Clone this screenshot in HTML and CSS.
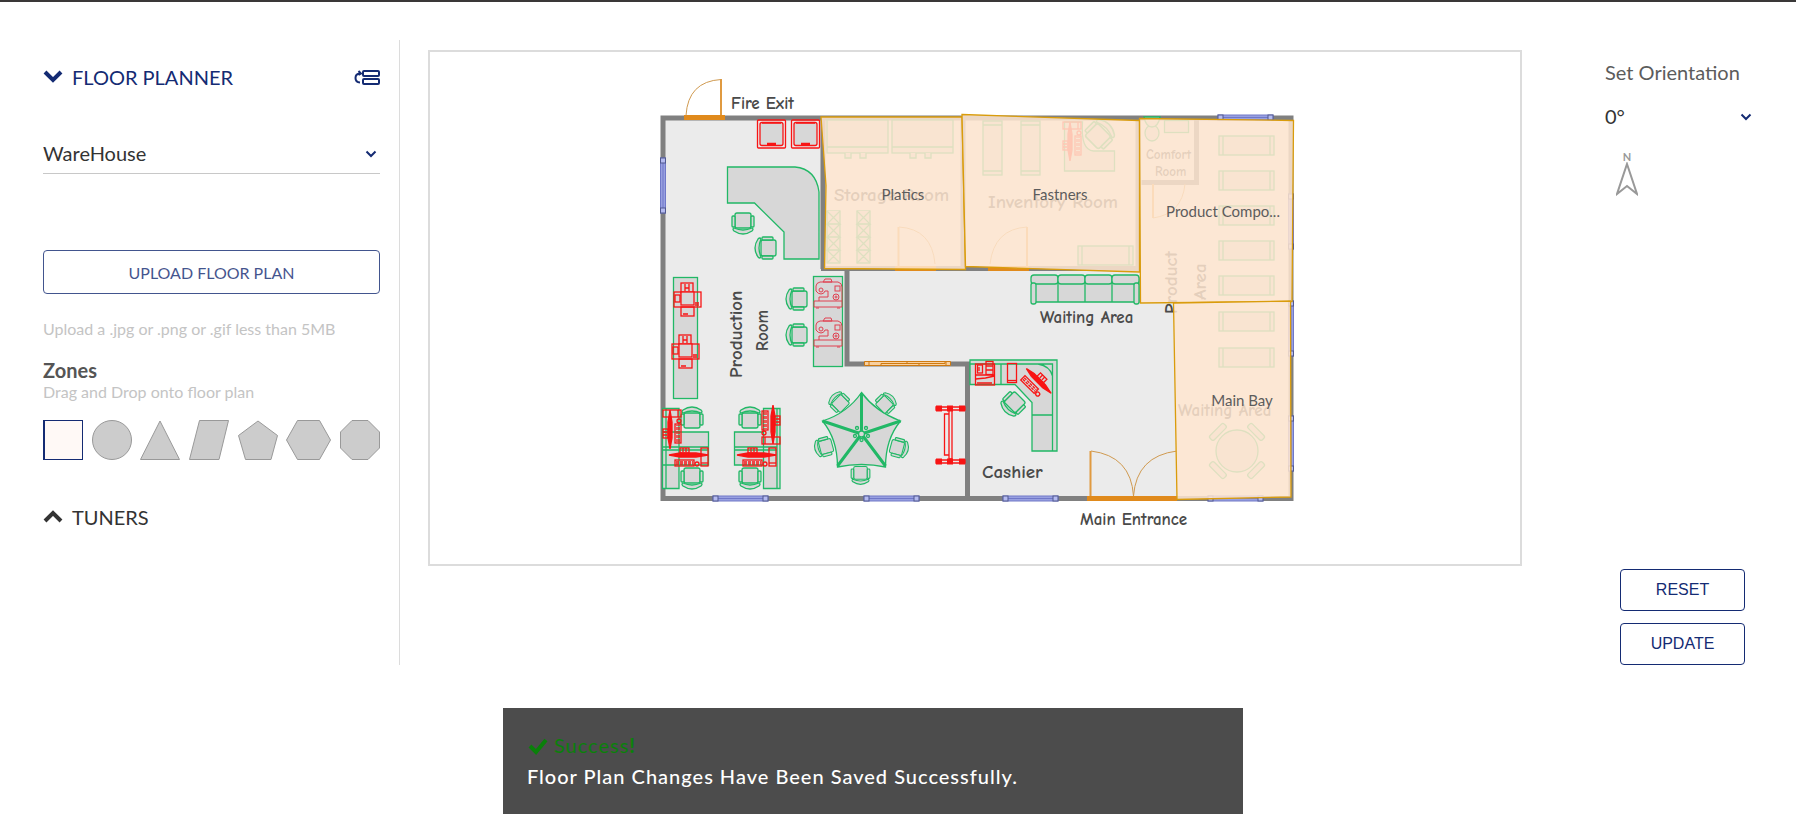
FILE: index.html
```html
<!DOCTYPE html>
<html lang="en">
    <head>
        <meta charset="UTF-8">
        <meta name="viewport" content="width=device-width, initial-scale=1.0">
        <title>Floor Planner</title>
        <link rel="stylesheet" href="styles.css">
    </head>
    <body>
        <main class="workspace">
            <aside class="sidebar">
                <div class="section-header active">
                    <svg class="section-arrow" width="20" height="14" viewBox="0 0 20 14"><path d="M2 2l8 8 8-8"/></svg>
                    <h2>FLOOR PLANNER</h2>
                    <svg class="layers-icon" width="26" height="18" viewBox="0 0 26 18">
                        <rect x="9" y="3" width="16" height="5" rx="1"/>
                        <rect x="9" y="11" width="16" height="5" rx="1"/>
                        <path d="M6 14.500C0 14 0 6 6 5.500M4.500 3l2.500 2.500L4.500 7"/>
                    </svg>
                </div>
                <div class="select-box plan-select">
                    <select aria-label="Floor plan">
                        <option>WareHouse</option>
                    </select>
                    <svg width="12" height="10" viewBox="0 0 12 10"><path d="M1.500 2.500l4.500 4.500 4.500-4.500"/></svg>
                </div>
                <button type="button" class="upload-button">UPLOAD FLOOR PLAN</button>
                <p class="hint">Upload a .jpg or .png or .gif less than 5MB</p>
                <h3>Zones</h3>
                <p class="hint">Drag and Drop onto floor plan</p>
                <div class="shapes">
                    <svg class="selected" width="40" height="40"><rect x="1" y="0.500" width="38.500" height="39"/><path d="M1 0v40"/></svg>
                    <svg width="40" height="40"><circle cx="20" cy="20" r="19.500"/></svg>
                    <svg width="40" height="40"><path d="M20 1l19.500 38.500H0.500z"/></svg>
                    <svg width="40" height="40"><path d="M10.500 0.500h29l-9.500 39H0.500z"/></svg>
                    <svg width="40" height="40"><path d="M20 1l19.500 14.500-6.500 24H7.500l-7-24z"/></svg>
                    <svg width="45" height="40"><path d="M11.500 0.500h22l11 19.500-11 19.500h-22L0.500 20z"/></svg>
                    <svg width="40" height="40"><path d="M12 0.500h16l11.500 11.500v16L28 39.500H12L0.500 28V12z"/></svg>
                </div>
                <div class="section-header">
                    <svg class="section-arrow" width="20" height="14" viewBox="0 0 20 14"><path d="M2 11l8-8 8 8"/></svg>
                    <h2>TUNERS</h2>
                </div>
            </aside>

            <section class="canvas">
                <svg class="plan" viewBox="430 52 1090 512">
                    <defs>
                        <g id="chair" class="furniture">
                            <rect x="-8" y="-10" width="16" height="15" rx="2"/>
                            <rect x="-11" y="-7" width="3" height="11" rx="1"/>
                            <rect x="8" y="-7" width="3" height="11" rx="1"/>
                            <path d="M-9 5q9 4 18 0q2 1 0 3q-9 6-18 0q-2-2 0-3z"/>
                        </g>
                        <g id="bed" class="furniture">
                            <rect width="55" height="19"/>
                            <path d="M4 0v19M51 0v19"/>
                        </g>
                        <g id="shelf" class="furniture">
                            <rect width="19" height="54"/>
                            <path d="M0 4h19M0 50h19"/>
                        </g>
                        <g id="crates" class="furniture">
                            <rect width="13" height="52"/>
                            <path d="M0 0l13 13H0L13 0M0 13l13 13H0l13-13M0 26l13 13H0l13-13M0 39l13 13M0 52l13-13"/>
                        </g>
                        <g id="cabinet" class="furniture">
                            <rect width="61" height="33"/>
                            <path d="M0 27h61M18 33v5h6v-5M33 33v5h6v-5"/>
                        </g>
                        <g id="printer" class="machine">
                            <rect x="-7" y="-16" width="12" height="10"/>
                            <path d="M-3-15v7M1-15v7M-3-11h4"/>
                            <rect x="-14" y="-7" width="27" height="15"/>
                            <rect x="-13" y="-4" width="5" height="7"/>
                            <rect class="solid" x="-7" y="-7" width="13" height="13"/>
                            <rect x="-7" y="8" width="13" height="9"/>
                            <path d="M-5 15h5M7 4h4M7 6h4"/>
                        </g>
                        <g id="sewing" class="machine thin">
                            <path d="M-14 7h28v6h-28zM-9 7v-4h9v-6h-3q-1 3-4 3t-5-3v-5q0-3 4-4h18q4 1 4 5v14M-5-12h9l-1-3h-6zM-12 14h3M9 14h3"/>
                            <circle cx="-7" cy="-4" r="2"/>
                            <circle cx="8" cy="3" r="3"/>
                            <circle cx="8" cy="3" r="1"/>
                            <rect x="7" y="-8" width="5" height="5"/>
                        </g>
                        <g id="computer" class="machine">
                            <path class="screen" d="M-19-2l11-2h16l12 2-12 2h-16z"/>
                            <rect x="-8" y="-9" width="9" height="5"/>
                            <path d="M-5-9v4M-2-9v4"/>
                            <rect x="-13" y="3" width="19" height="6"/>
                            <path class="keys" d="M-12 5h17M-12 7h17"/>
                            <circle cx="9" cy="7" r="2"/>
                            <rect x="13" y="-9" width="7" height="18"/>
                            <path d="M13 6h7"/>
                        </g>
                        <g id="window" class="window">
                            <rect width="55" height="5"/>
                            <path d="M5 2.500h45"/>
                            <rect class="frame" width="5" height="5"/>
                            <rect class="frame" x="50" width="5" height="5"/>
                        </g>
                        <g id="washer" class="machine">
                            <rect x="0.500" y="0.500" width="28" height="28" rx="1"/>
                            <rect class="solid" x="3" y="3" width="23" height="23" rx="2"/>
                            <path d="M5 3.500h19M10 25.500h9M10 24h9"/>
                        </g>
                    </defs>

                    <!-- walls -->
                    <rect class="floor" x="663" y="118" width="628" height="380.500"/>
                    <path class="wall" d="M823 118v151M821 268.500h319M847 269v95.500M844.500 364h125.500M967.500 362v136M963 118v150M1138 118v150M1196.500 118v64.500h-55"/>

                    <!-- windows -->
                    <use href="#window" x="713" y="496"/>
                    <use href="#window" x="864" y="496"/>
                    <use href="#window" x="1003" y="496"/>
                    <use href="#window" x="1208" y="496"/>
                    <use href="#window" x="1218" y="115"/>
                    <use href="#window" transform="translate(665.500 158) rotate(90)"/>
                    <use href="#window" transform="translate(1293.500 194) rotate(90)"/>
                    <use href="#window" transform="translate(1293.500 301) rotate(90)"/>
                    <use href="#window" transform="translate(1293.500 416) rotate(90)"/>

                    <!-- doors -->
                    <path class="sill" d="M684 117.500h41M1087 498.500h90M895 268.500h41M988 268.500h41"/>
                    <path class="leaf" d="M721 79v36M1090.500 451v45M898.500 227v40M1027 227v40M1153 184v34"/>
                    <path class="swing" d="M721 79.500q-33 2-35 36M1091 451q40 5 42.500 45q3-40 43.500-45M899 227q33 2 36 37M1027 227q-33 2-37 37M1153 218q29-4 32-34"/>
                    <path class="slider" d="M864.500 361.500h86v4h-86zM881 363.500h38v2h-38zM907 361.500h38v2h-38zM869 361.500v4M946 361.500v4"/>

                    <!-- production room -->
                    <use href="#washer" x="757" y="119.500"/>
                    <use href="#washer" x="791" y="119.500"/>
                    <path class="furniture" d="M727.500 167H795q21 2 24 25v67h-35v-27l-29.500-29h-27z"/>
                    <use href="#chair" transform="translate(743 223)"/>
                    <use href="#chair" transform="translate(766 248) rotate(90)"/>
                    <rect class="furniture" x="673.500" y="277.500" width="24" height="121"/>
                    <use href="#printer" x="688" y="299"/>
                    <use href="#printer" x="686" y="351"/>
                    <rect class="furniture" x="813.500" y="276.500" width="29" height="90"/>
                    <use href="#sewing" x="828" y="294"/>
                    <use href="#sewing" x="828" y="333"/>
                    <use href="#chair" transform="translate(797 299) rotate(90)"/>
                    <use href="#chair" transform="translate(797 335) rotate(90)"/>

                    <path class="furniture" d="M662.500 408.500h16.500v80h-16.500zM666 408.500v80M662.500 432h46v33h-46zM662.500 447h46M662.500 450h46"/>
                    <use href="#chair" transform="translate(692 418) rotate(180)"/>
                    <use href="#chair" transform="translate(692 478)"/>
                    <use href="#computer" transform="translate(672 430) rotate(-90)"/>
                    <use href="#computer" transform="translate(688 457)"/>

                    <path class="furniture" d="M763.500 408.500h16.500v80h-16.500zM777 408.500v80M734.500 432h29v33h-29zM734.500 447h42M734.500 450h42"/>
                    <use href="#chair" transform="translate(750 418) rotate(180)"/>
                    <use href="#chair" transform="translate(750 478)"/>
                    <use href="#computer" transform="translate(771 424) rotate(90)"/>
                    <use href="#computer" transform="translate(756 457)"/>

                    <!-- parasol table -->
                    <path class="furniture" d="M861.500 392.500q14 19 39 28.500q-15 18-15 46q-24-5-48 0q0-28-15-46q25-8 39-28.500z"/>
                    <path class="ribs" d="M861.500 434v-41M861.500 434l39-13M861.500 434l24 32M861.500 434l-24 32M861.500 434l-39-13"/>
                    <circle class="furniture" cx="861.500" cy="434" r="3"/>
                    <circle class="furniture" cx="857" cy="428" r="1.500"/>
                    <circle class="furniture" cx="866" cy="428" r="1.500"/>
                    <circle class="furniture" cx="855" cy="436" r="1.500"/>
                    <circle class="furniture" cx="868" cy="436" r="1.500"/>
                    <circle class="furniture" cx="861.500" cy="440" r="1.500"/>
                    <use href="#chair" transform="translate(839 402) rotate(135) scale(.85)"/>
                    <use href="#chair" transform="translate(886 403) rotate(-135) scale(.85)"/>
                    <use href="#chair" transform="translate(824 447) rotate(75) scale(.85)"/>
                    <use href="#chair" transform="translate(899 448) rotate(-75) scale(.85)"/>
                    <use href="#chair" transform="translate(860.500 475) scale(.85)"/>

                    <!-- rack -->
                    <g class="machine">
                        <path d="M949 411v48h3v-48M944.500 414h4.500v41h-4.500z"/>
                        <path d="M936 407h29v3h-29zM936 460h29v3h-29z"/>
                        <path class="bolts" d="M936 408.500h6M947 408.500h6M959 408.500h6M936 461.500h6M947 461.500h6M959 461.500h6"/>
                    </g>

                    <!-- cashier -->
                    <path class="furniture" d="M970 360h87v91h-25v-48.500l-17-18h-45z"/>
                    <path class="furniture outline" d="M970 364h82.500v87M1001 364v20.500M1032 415h20.500M1038 364q12 2 14.500 12"/>
                    <use href="#chair" transform="translate(1013 404) rotate(45)"/>
                    <g class="machine">
                        <rect x="975.500" y="364" width="19" height="21"/>
                        <rect x="986" y="361.500" width="7" height="13"/>
                        <rect x="977.500" y="365" width="5" height="8"/>
                        <path d="M975.500 375h19M975.500 379l10-1 9-2M979 367v4M986 366h7M986 370h7M977 383h15"/>
                        <rect x="1007.500" y="363.500" width="9" height="19"/>
                        <path d="M1007.500 380.500h9"/>
                    </g>
                    <g class="machine" transform="translate(1037 382) rotate(45)">
                        <path class="screen" d="M-17-2l9-2h16l10 2-10 2h-16z"/>
                        <rect x="-4" y="-9" width="9" height="5"/>
                        <path d="M-1-9v4M2-9v4"/>
                        <rect x="-13" y="4" width="19" height="6"/>
                        <path class="keys" d="M-12 6h17M-12 8h17"/>
                        <circle cx="9" cy="8" r="2"/>
                    </g>

                    <!-- sofa -->
                    <path class="furniture" d="M1032 278h107v24h-107zM1058 278v24M1085 278v24M1112 278v24"/>
                    <rect class="furniture" x="1031" y="275" width="27" height="9" rx="3"/>
                    <rect class="furniture" x="1058" y="275" width="27" height="9" rx="3"/>
                    <rect class="furniture" x="1085" y="275" width="27" height="9" rx="3"/>
                    <rect class="furniture" x="1112" y="275" width="27" height="9" rx="3"/>
                    <rect class="furniture" x="1031" y="283" width="5" height="21" rx="2"/>
                    <rect class="furniture" x="1134" y="283" width="5" height="21" rx="2"/>

                    <!-- storage, inventory and product rooms -->
                    <use href="#cabinet" x="827" y="120"/>
                    <use href="#cabinet" x="892" y="120"/>
                    <use href="#crates" x="827" y="211"/>
                    <use href="#crates" x="857" y="211"/>
                    <use href="#shelf" x="983" y="121"/>
                    <use href="#shelf" x="1021" y="121"/>
                    <path class="furniture" d="M1064.500 122h18q-2 28 11 29h21v20h-50z"/>
                    <use href="#chair" transform="translate(1100 134) rotate(-135) scale(1.200)"/>
                    <use href="#computer" transform="translate(1072 142) rotate(-90)"/>
                    <use href="#bed" x="1078" y="246"/>
                    <rect class="furniture" x="1164.500" y="120.500" width="24" height="12"/>
                    <ellipse class="furniture" cx="1152" cy="133" rx="7" ry="8"/>
                    <path class="furniture" d="M1144 117h16q-2 10-8 10t-8-10z"/>
                    <use href="#bed" x="1219" y="136"/>
                    <use href="#bed" x="1219" y="171"/>
                    <use href="#bed" x="1219" y="206"/>
                    <use href="#bed" x="1219" y="241"/>
                    <use href="#bed" x="1219" y="276"/>
                    <use href="#bed" x="1219" y="312"/>
                    <use href="#bed" x="1219" y="348"/>
                    <circle class="furniture" cx="1237" cy="451" r="21"/>
                    <g class="furniture">
                        <rect x="-10" y="24" width="20" height="6" rx="2" transform="translate(1237 451) rotate(45)"/>
                        <rect x="-10" y="24" width="20" height="6" rx="2" transform="translate(1237 451) rotate(135)"/>
                        <rect x="-10" y="24" width="20" height="6" rx="2" transform="translate(1237 451) rotate(-45)"/>
                        <rect x="-10" y="24" width="20" height="6" rx="2" transform="translate(1237 451) rotate(-135)"/>
                    </g>

                    <!-- room names -->
                    <g class="room-name">
                        <text x="731" y="109">Fire Exit</text>
                        <text class="large" transform="translate(742 378) rotate(-90)">Production</text>
                        <text transform="translate(768 351) rotate(-90)">Room</text>
                        <text class="large" x="834" y="201">Storage Room</text>
                        <text class="large" x="988" y="208">Inventory Room</text>
                        <text class="small" x="1146" y="159">Comfort</text>
                        <text class="small" x="1155" y="176">Room</text>
                        <text class="large" transform="translate(1177 314) rotate(-90)">Product</text>
                        <text class="large" transform="translate(1206 300) rotate(-90)">Area</text>
                        <text x="1040" y="323">Waiting Area</text>
                        <text x="1178" y="416">Waiting Area</text>
                        <text class="large" x="982" y="478">Cashier</text>
                        <text x="1080" y="525">Main Entrance</text>
                    </g>

                    <!-- zones -->
                    <g class="zone">
                        <path d="M821 117h141l3.500 152.500-141-1 1.500-83z"/>
                        <path d="M962 114.500l177.500 6v151.500l-174-5.500z"/>
                        <path d="M1139.500 118.500l154 2-1.500 181-151.500 1.500z"/>
                        <path d="M1173.500 303l117-2 0.500 196-114 2.500z"/>
                        <text x="903" y="200">Platics</text>
                        <text x="1060" y="200">Fastners</text>
                        <text x="1223" y="217">Product Compo...</text>
                        <text x="1242" y="406">Main Bay</text>
                    </g>
                </svg>
            </section>

            <aside class="options">
                <label for="orientation">Set Orientation</label>
                <div class="select-box">
                    <select id="orientation">
                        <option>0°</option>
                    </select>
                    <svg width="12" height="10" viewBox="0 0 12 10"><path d="M1.500 2.500l4.500 4.500 4.500-4.500"/></svg>
                </div>
                <div class="compass">
                    <span>N</span>
                    <svg width="22" height="34" viewBox="0 0 22 34"><path d="M11 2l10 30-10-8-10 8z"/></svg>
                </div>
                <div class="actions">
                    <button type="button">RESET</button>
                    <button type="button">UPDATE</button>
                </div>
            </aside>
        </main>

        <div class="toast" role="status">
            <p class="toast-title">
                <svg width="22" height="20" viewBox="0 0 22 20"><path d="M3 10l6 6L19 4"/></svg>
                <span>Success<b>!</b></span>
            </p>
            <p>Floor Plan Changes Have Been Saved Successfully.</p>
        </div>
    </body>
</html>
```
FILE: styles.css
```css
* {
    box-sizing: border-box;
}
body {
    margin: 0;
    border-top: 2px solid #3a3838;
    background-color: #fff;
    color: #333;
    font-family: Lato, sans-serif;
    font-size: 20px;
    line-height: 24px;
}
h2, h3, p {
    margin: 0;
}
button {
    border: 1px solid #142b73;
    border-radius: 4px;
    background-color: #fff;
    color: #142b73;
    font-size: 16px;
    cursor: pointer;
}
.workspace {
    display: flex;
    min-height: 663px;
    padding: 38px 41px 0 43px;
}

/* left panel */
.sidebar {
    flex: 0 0 357px;
    padding: 25px 19px 0 0;
    border-right: 1px solid #dcdcdc;
}
.section-header {
    display: flex;
    align-items: center;
}
.section-header h2 {
    margin-left: 9px;
    font-size: 20px;
    font-weight: normal;
}
.active {
    color: #142b73;
}
.section-arrow {
    fill: none;
    stroke: currentColor;
    stroke-width: 4;
}
.layers-icon {
    margin-left: auto;
    fill: none;
    stroke: currentColor;
    stroke-width: 2;
}
.select-box {
    position: relative;
    color: #142b73;
}
.select-box select {
    appearance: none;
    display: block;
    width: 100%;
    height: 40px;
    padding: 0;
    border: none;
    background: none;
    color: #333;
    font-family: inherit;
    font-size: 20px;
}
.select-box svg {
    position: absolute;
    top: 16px;
    right: 3px;
    fill: none;
    stroke: currentColor;
    stroke-width: 2;
    pointer-events: none;
}
.plan-select {
    margin-top: 44px;
    border-bottom: 1px solid #c8c8c8;
}
.upload-button {
    width: 100%;
    height: 44px;
    margin: 76px 0 25px;
    font-family: inherit;
    opacity: 0.8;
}
.hint {
    color: #c4c4c4;
    font-size: 16px;
    line-height: 20px;
}
h3 {
    margin-top: 19px;
    color: #555;
    font-size: 20px;
}
.shapes {
    display: flex;
    justify-content: space-between;
    margin: 18px 0 45px;
    fill: #ccc;
    stroke: #999;
}
.shapes .selected {
    fill: #fff9f6;
    stroke: #142b73;
}
.shapes .selected path {
    stroke-width: 2;
}

/* floor plan */
.canvas {
    flex: 1;
    align-self: flex-start;
    margin: 10px 83px 0 28px;
    border: 2px solid #dcdcdc;
}
.plan {
    display: block;
    width: 100%;
}
.floor {
    fill: #ebebeb;
    stroke: #808080;
    stroke-width: 5;
}
.wall {
    fill: none;
    stroke: #808080;
    stroke-width: 5;
}
.furniture {
    fill: #d7d7d7;
    stroke: #21b866;
    stroke-width: 1.3;
}
.outline {
    fill: none;
}
.ribs {
    stroke: #21b866;
    stroke-width: 3;
}
.machine {
    fill: none;
    stroke: #f81414;
    stroke-width: 1.3;
}
.machine.thin {
    stroke: #e04050;
    stroke-width: 1;
}
.machine .solid {
    fill: #d7d7d7;
}
.machine .screen {
    fill: #f81414;
}
.machine .keys {
    stroke-dasharray: 3 1;
}
.machine .bolts {
    stroke-width: 6;
}
.window {
    fill: #98a0e0;
    stroke: #7078c8;
    stroke-width: 1;
}
.window .frame {
    fill: #b4baf0;
    stroke: #505890;
}
.sill {
    stroke: #e08a1c;
    stroke-width: 5;
}
.leaf {
    stroke: #e09a40;
    stroke-width: 2;
}
.swing {
    fill: none;
    stroke: #d09a50;
}
.slider {
    fill: #f8d0a0;
    stroke: #cf7a10;
}
.room-name {
    fill: #4a4a4a;
    font-family: "Comic Sans MS", "Comic Neue", "Open Sans", sans-serif;
    font-size: 17px;
    font-weight: 600;
}
.room-name .small {
    font-size: 13px;
}
.room-name .large {
    font-size: 19px;
}
.zone path {
    fill: #ffe6d0;
    fill-opacity: 0.85;
    stroke: #d99c0c;
    stroke-width: 1.3;
}
.zone text {
    fill: #5c5c5c;
    font-size: 15px;
    text-anchor: middle;
}

/* right panel */
.options {
    display: flex;
    flex: 0 0 150px;
    flex-direction: column;
    padding-top: 20px;
}
.options label {
    margin-bottom: 12px;
    color: #5c5c5c;
}
.compass {
    display: flex;
    flex-direction: column;
    align-items: center;
    width: 22px;
    margin: 15px 0 0 11px;
    color: #999;
    font-size: 11px;
    font-weight: bold;
    line-height: 11px;
}
.compass svg {
    fill: none;
    stroke: #999;
    stroke-width: 2;
}
.actions {
    display: flex;
    flex-direction: column;
    gap: 12px;
    margin: auto 10px 0 15px;
}
.actions button {
    height: 42px;
    font-family: "Liberation Sans", Arial, sans-serif;
}

/* save message */
.toast {
    position: fixed;
    bottom: 16px;
    left: 28%;
    width: 740px;
    padding: 22px 24px;
    background-color: #4c4c4c;
    color: #fff;
    font-weight: 500;
    letter-spacing: 1px;
    line-height: 31px;
}
.toast-title {
    display: flex;
    align-items: center;
    gap: 5px;
    color: #0a800a;
    font-weight: normal;
}
.toast-title svg {
    fill: none;
    stroke: currentColor;
    stroke-width: 4;
}
```
